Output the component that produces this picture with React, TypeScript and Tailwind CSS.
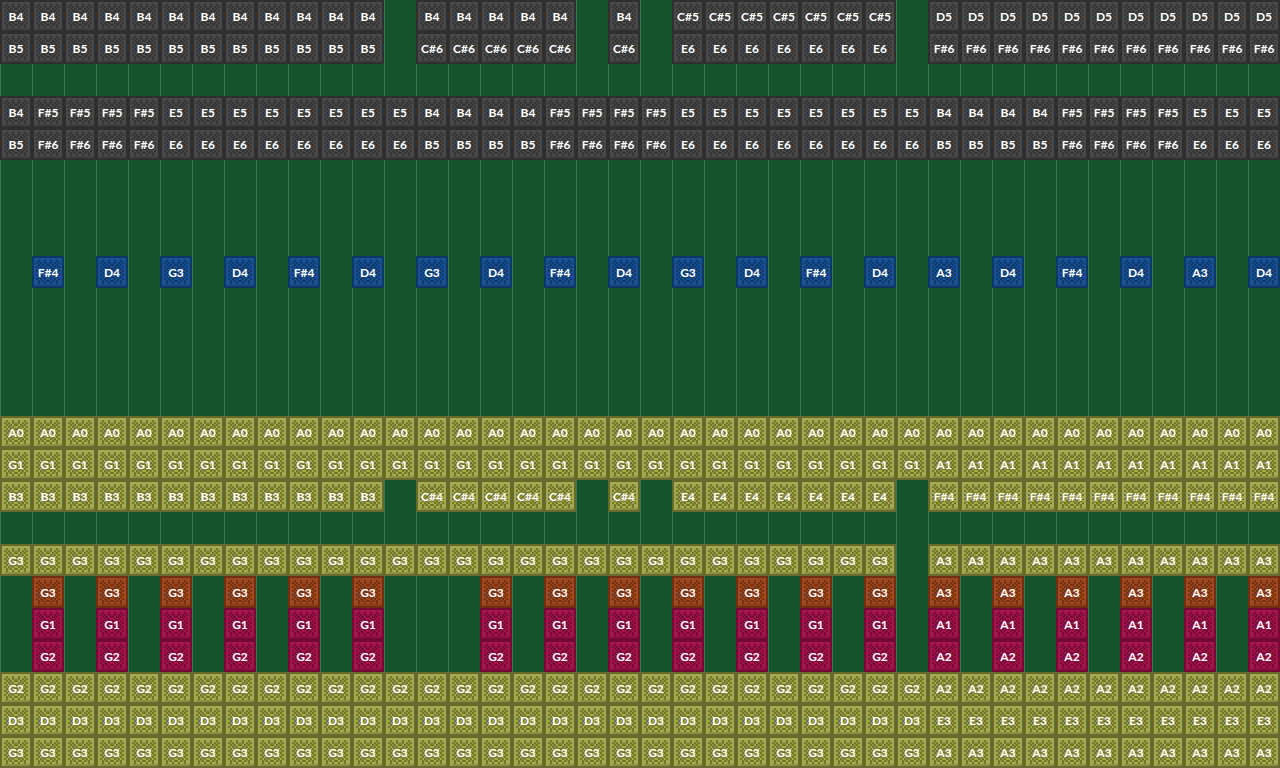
const KEYS = {
  gray: { edge: "#2f2f2f", dark: "#363636", mid: "#404040", light: "#484848" },
  blue: { edge: "#0f3766", dark: "#103a6c", mid: "#144a88", light: "#175195" },
  gold: { edge: "#676a2e", dark: "#72762f", mid: "#8c913d", light: "#a3a94c" },
  orange: { edge: "#702f13", dark: "#753213", mid: "#8f3e19", light: "#a2481f" },
  pink: { edge: "#720a31", dark: "#790b35", mid: "#930f43", light: "#a5144d" },
};

type Color = keyof typeof KEYS;

const PATTERN = [
  "################",
  "#oooooooooooooo#",
  "#oo.oo.oo.oo.oo#",
  "#o.+.o.++.o.+.o#",
  "#oo.+.o..o.+.oo#",
  "#o.o.+.oo.+.o.o#",
  "#oo.o.+..+.o.oo#",
  "#o.+.o.++.o.+.o#",
  "#oo.+.o..o.+.oo#",
  "#o.+.o.++.o.+.o#",
  "#oo.o.+..+.o.oo#",
  "#o.o.+.oo.+.o.o#",
  "#oo.+.o..o.+.oo#",
  "#oo.oo.oo.oo.oo#",
  "#o+++++++++++++#",
  "################",
];

const run = (text: string, count: number) => Array(count).fill(text);

const melody = (a: string, b: string, c: string, d: string) => [
  ...run(a, 12), "", ...run(b, 5), "", b, "", ...run(c, 7), "", ...run(d, 11),
];

const upper = (n: number) => [
  "B" + (n + 4), ...run("F#" + (n + 5), 4), ...run("E" + (n + 5), 8), ...run("B" + (n + 4), 4),
  ...run("F#" + (n + 5), 4), ...run("E" + (n + 5), 8), ...run("B" + (n + 4), 4),
  ...run("F#" + (n + 5), 4), ...run("E" + (n + 5), 3),
];

const arpeggio = ["F#4", "D4", "G3", "D4", "F#4", "D4", "G3", "D4", "F#4", "D4", "G3", "D4", "F#4", "D4", "A3", "D4", "F#4", "D4", "A3", "D4"];

const arpeggioRow = Array.from({ length: 40 }, (_, i) => (i % 2 ? arpeggio[(i - 1) / 2] : ""));

// every second beat, with a rest on beat 13
const drums = (a: string, b: string) =>
  Array.from({ length: 40 }, (_, i) => (i % 2 === 0 || i === 13 ? "" : i < 29 ? a : b));

const rows: { color?: Color; notes: string[] }[] = [
  { color: "gray", notes: melody("B4", "B4", "C#5", "D5") },
  { color: "gray", notes: melody("B5", "C#6", "E6", "F#6") },
  { notes: [] },
  { color: "gray", notes: upper(0) },
  { color: "gray", notes: upper(1) },
  { notes: [] },
  { notes: [] },
  { notes: [] },
  { color: "blue", notes: arpeggioRow },
  { notes: [] },
  { notes: [] },
  { notes: [] },
  { notes: [] },
  { color: "gold", notes: run("A0", 40) },
  { color: "gold", notes: [...run("G1", 29), ...run("A1", 11)] },
  { color: "gold", notes: melody("B3", "C#4", "E4", "F#4") },
  { notes: [] },
  { color: "gold", notes: [...run("G3", 28), "", ...run("A3", 11)] },
  { color: "orange", notes: drums("G3", "A3") },
  { color: "pink", notes: drums("G1", "A1") },
  { color: "pink", notes: drums("G2", "A2") },
  { color: "gold", notes: [...run("G2", 29), ...run("A2", 11)] },
  { color: "gold", notes: [...run("D3", 29), ...run("E3", 11)] },
  { color: "gold", notes: [...run("G3", 29), ...run("A3", 11)] },
];

function texture(symbol: string) {
  return PATTERN.map((line, y) =>
    line.split("").map((c, x) => (c === symbol ? `M${x} ${y}h1v1h-1z` : "")).join("")
  ).join("");
}

const DARK = texture(".");
const MID = texture("+");
const LIGHT = texture("o");

function Textures() {
  return (
    <svg className="absolute size-0" aria-hidden="true">
      {Object.entries(KEYS).map(([name, c]) => (
        <symbol key={name} id={name} viewBox="0 0 16 16" shapeRendering="crispEdges">
          <path fill={c.edge} d="M0 0h16v16h-16z" />
          <path fill={c.dark} d={DARK} />
          <path fill={c.mid} d={MID} />
          <path fill={c.light} d={LIGHT} />
        </symbol>
      ))}
    </svg>
  );
}

function Note({ color, text }: { color: Color; text: string }) {
  return (
    <div className="relative size-8 pt-px text-center">
      <svg className="absolute inset-0 size-8" aria-hidden="true">
        <use href={"#" + color} />
      </svg>
      <span className="relative">{text}</span>
    </div>
  );
}

export default function App() {
  return (
    <main className="min-h-screen overflow-hidden bg-[#15532d] font-['Lato',sans-serif] text-xs leading-8 font-bold text-white">
      <Textures />
      {rows.map((row, y) => (
        <div key={y} className="grid grid-cols-[repeat(40,32px)]">
          {Array.from({ length: 40 }, (_, x) => (
            <div key={x} className="h-8 shadow-[inset_1px_0_0_#3d7352]">
              {row.color && row.notes[x] && <Note color={row.color} text={row.notes[x]} />}
            </div>
          ))}
        </div>
      ))}
    </main>
  );
}
